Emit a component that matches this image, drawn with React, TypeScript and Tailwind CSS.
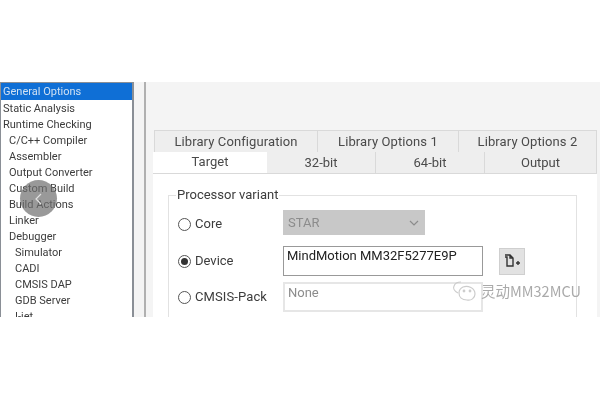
const items = [
  { label: 'General Options', indent: 'pl-[2px]', active: true },
  { label: 'Static Analysis', indent: 'pl-[2px]' },
  { label: 'Runtime Checking', indent: 'pl-[2px]' },
  { label: 'C/C++ Compiler', indent: 'pl-[8px]' },
  { label: 'Assembler', indent: 'pl-[8px]' },
  { label: 'Output Converter', indent: 'pl-[8px]' },
  { label: 'Custom Build', indent: 'pl-[8px]' },
  { label: 'Build Actions', indent: 'pl-[8px]' },
  { label: 'Linker', indent: 'pl-[8px]' },
  { label: 'Debugger', indent: 'pl-[8px]' },
  { label: 'Simulator', indent: 'pl-[14px]' },
  { label: 'CADI', indent: 'pl-[14px]' },
  { label: 'CMSIS DAP', indent: 'pl-[14px]' },
  { label: 'GDB Server', indent: 'pl-[14px]' },
  { label: 'I-jet', indent: 'pl-[14px]' },
];

function Radio({ checked }: { checked?: boolean }) {
  return (
    <span className="flex h-[13px] w-[13px] shrink-0 items-center justify-center rounded-full border border-[#555] bg-white">
      {checked && <span className="h-[7px] w-[7px] rounded-full bg-[#333]" />}
    </span>
  );
}

function Tab({ label, className }: { label: string; className: string }) {
  return (
    <div className={`flex items-center justify-center border-r border-[#d9d9d9] bg-[#eeeeee] ${className}`}>
      {label}
    </div>
  );
}

export default function App() {
  return (
    <div className="h-[400px] w-[600px] overflow-hidden bg-white pt-[82px] font-['Roboto',sans-serif] text-[#3c3c3c] blur-[0.4px]">
      <div className="flex h-[235px] overflow-hidden bg-[#f4f4f4]">
        {/* tree */}
        <div className="relative w-[134px] shrink-0 overflow-hidden border-t border-r-2 border-l border-[#8a8f96] bg-white text-[11px] leading-[18px]">
          {items.map((item) => (
            <div
              key={item.label}
              className={`whitespace-nowrap ${item.indent} ${item.active ? 'h-[17px] bg-[#0f6fd6] text-[#cfe0f2]' : 'h-[16px]'}`}
            >
              {item.label}
            </div>
          ))}
          {/* video back button */}
          <div className="absolute top-[97px] left-[19px] flex h-[37px] w-[37px] items-center justify-center rounded-full bg-[#6e6e6e]/70">
            <svg width="10" height="14" viewBox="0 0 10 14" fill="none" stroke="#e0e0e0" strokeWidth="1.2">
              <path d="M7 2 2 7l5 5" />
            </svg>
          </div>
        </div>

        <div className="ml-[10px] w-[2px] shrink-0 bg-[#b0b0b0]" />

        {/* options */}
        <div className="relative min-w-0 flex-1 pt-[48px] pl-[7px] text-[13px]">
          <div className="ml-[1px] flex h-[22px] w-[443px] border-t border-l border-[#d9d9d9] tracking-[0.1px] text-[#4a4a4a]">
            <Tab label="Library Configuration" className="w-[163px]" />
            <Tab label="Library Options 1" className="w-[141px]" />
            <Tab label="Library Options 2" className="flex-1" />
          </div>
          <div className="flex h-[22px] w-[444px] border-b border-[#d9d9d9] text-[#4a4a4a]">
            <div className="flex w-[114px] items-start justify-center bg-white">Target</div>
            <Tab label="32-bit" className="w-[109px]" />
            <Tab label="64-bit" className="w-[109px]" />
            <Tab label="Output" className="flex-1" />
          </div>

          <div className="h-[143px] w-[444px] bg-white pt-[21px] pl-[15px]">
            <div className="relative h-[130px] w-[409px] border-t border-r border-l border-[#e2e2e2] pt-[14px] pl-[9px]">
              <span className="absolute -top-[9px] left-[7px] bg-white px-[1px] leading-[16px]">Processor variant</span>

              <div className="flex h-[25px] items-center">
                <div className="flex items-center pt-[3px]">
                  <Radio />
                  <span className="ml-[4px] w-[88px]">Core</span>
                </div>
                <div className="flex h-[25px] w-[142px] items-center justify-between bg-[#c8c8c8] pr-[6px] pl-[5px] text-[#8c8c8c]">
                  STAR
                  <svg width="10" height="6" viewBox="0 0 10 6" fill="none" stroke="#8c8c8c" strokeWidth="1.2">
                    <path d="M1 1l4 4 4-4" />
                  </svg>
                </div>
              </div>

              <div className="mt-[11px] flex h-[30px] items-center">
                <Radio checked />
                <span className="ml-[4px] w-[88px]">Device</span>
                <div className="h-[30px] w-[200px] border border-[#999] bg-white pl-[3px] leading-[18px] text-[#222]">
                  MindMotion MM32F5277E9P
                </div>
                <div className="ml-[16px] flex h-[27px] w-[26px] items-center justify-center border border-[#cfcfcf] bg-[#e2e2e2]">
                  <svg width="17" height="14" viewBox="0 0 17 14" fill="none" stroke="#333" strokeWidth="1.4">
                    <path d="M1 1h5l3 3v8H3V3H1M6 1v3h3M3 12h6M12 9h4M14 7v4" />
                  </svg>
                </div>
              </div>

              <div className="mt-[6px] flex h-[30px] items-center">
                <Radio />
                <span className="ml-[4px] w-[88px] tracking-[0.1px]">CMSIS-Pack</span>
                <div className="h-[30px] w-[200px] border-2 border-[#e6e6e6] bg-white pl-[3px] leading-[18px] text-[#8c8c8c]">None</div>
              </div>

              {/* watermark */}
              <div className="absolute top-[84px] left-[283px] flex items-center gap-[4px] text-[14.5px] whitespace-nowrap text-[#aaa]">
                <svg width="25" height="22" viewBox="0 0 25 22" fill="#ffffff" stroke="#cccccc" strokeWidth="1.2">
                  <path d="M6 13C2 11 1 8 2 6c1-3 4-4 7-4" fill="none" />
                  <path d="M11 7c5-2 12 1 12 7 0 4-4 7-8 6-5 0-8-3-8-7 0-3 2-5 4-6Z" />
                  <circle cx="12" cy="11" r="0.8" fill="#cccccc" />
                  <circle cx="18" cy="11" r="0.8" fill="#cccccc" />
                </svg>
                <span className="font-['Noto_Sans_CJK_SC','Noto_Sans',sans-serif]">灵动MM32MCU</span>
              </div>
            </div>
          </div>
        </div>
      </div>
    </div>
  );
}
